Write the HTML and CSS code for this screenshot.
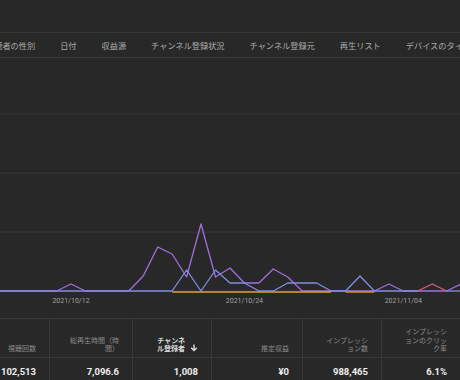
FILE: index.html
```html
<!DOCTYPE html>
<html lang="ja">
<head>
  <meta charset="UTF-8">
  <meta name="viewport" content="width=device-width, initial-scale=1.0">
  <title>アナリティクス</title>
  <link rel="stylesheet" href="styles.css">
</head>
<body>
  <div class="topbar"></div>
  <nav class="tabs">
    <span class="tab">視聴者の性別</span>
    <span class="tab">日付</span>
    <span class="tab">収益源</span>
    <span class="tab">チャンネル登録状況</span>
    <span class="tab">チャンネル登録元</span>
    <span class="tab">再生リスト</span>
    <span class="tab">デバイスのタイプ</span>
  </nav>
  <div class="chart">
    <svg width="460" height="260" viewBox="0 58 460 260">
      <g class="grid">
        <line x1="0" y1="114" x2="460" y2="114"/>
        <line x1="0" y1="173" x2="460" y2="173"/>
        <line x1="0" y1="232" x2="460" y2="232"/>
        <line x1="0" y1="291" x2="460" y2="291"/>
      </g>
      <polyline class="line purple" points="0,291 56.5,291 71,284 85.5,291 128.8,291 143.2,276 157.7,247 172.1,254 186.6,277 201,224 215.5,277 230,268 244.4,283 258.9,283 273.3,269 287.7,277 302.2,291 374.4,291 388.9,284 403.3,291 446.7,291 461,284"/>
      <polyline class="line orange" points="172.1,292 331.1,292"/>
      <polyline class="line orange" points="345.5,292 374.4,292"/>
      <polyline class="line blue" points="0,291 172.1,291 186.6,270 201,291 215.5,270 230,283 244.4,283 258.9,291 273.3,291 287.7,283 316.6,283 331.1,291 345.5,291 360,276 374.4,291 417.8,291"/>
      <polyline class="line red" points="417.8,291 432.2,284 446.7,291"/>
      <polyline class="line blue" points="446.7,291 461,291"/>
      <g class="dates">
        <text x="71" y="302.5">2021/10/12</text>
        <text x="244.4" y="302.5">2021/10/24</text>
        <text x="403.3" y="302.5">2021/11/04</text>
      </g>
    </svg>
  </div>
  <table class="metrics">
    <tr class="head">
      <th class="c1">視聴回数</th>
      <th class="c2">総再生時間（時<br>間）</th>
      <th class="c3 sorted">
        <div class="sortlabel">
          <span>チャンネ<br>ル登録者</span>
          <svg class="arrow" width="8" height="8" viewBox="0 0 8 8"><path d="M4 0.5v6M1.2 3.8L4 6.6l2.8-2.8"/></svg>
        </div>
      </th>
      <th class="c4">推定収益</th>
      <th class="c5">インプレッシ<br>ョン数</th>
      <th class="c6">インプレッシ<br>ョンのクリッ<br>ク率</th>
      <th class="c7"></th>
    </tr>
    <tr class="total">
      <td>102,513</td>
      <td>7,096.6</td>
      <td>1,008</td>
      <td>¥0</td>
      <td>988,465</td>
      <td>6.1%</td>
      <td></td>
    </tr>
  </table>
</body>
</html>
```

FILE: styles.css
```css
body {
  margin: 0;
  width: 460px;
  height: 380px;
  overflow: hidden;
  background: #282828;
  font-family: Roboto, "Noto Sans CJK JP", sans-serif;
}
.topbar {
  height: 32px;
  border-bottom: 1px solid #3a3a3a;
}
.tabs {
  display: flex;
  align-items: center;
  gap: 25px;
  height: 24px;
  margin-left: -14px;
  border-bottom: 1px solid #3a3a3a;
  font-family: "Noto Sans CJK JP", sans-serif;
  font-size: 8.2px;
  color: #acacac;
  white-space: nowrap;
}
.chart {
  height: 260px;
}
.chart svg {
  display: block;
}
.grid line {
  stroke: #363636;
  stroke-width: 1;
}
.line {
  fill: none;
  stroke-width: 1.3;
  stroke-linejoin: round;
}
.purple { stroke: #a06fdc; }
.blue { stroke: #7f8fe0; }
.orange { stroke: #e0a030; }
.red { stroke: #d8607a; }
.dates text {
  fill: #a0a0a0;
  font-family: Roboto, sans-serif;
  font-size: 7px;
  text-anchor: middle;
}
.metrics {
  border-collapse: collapse;
  table-layout: fixed;
  width: 460px;
}
.metrics th, .metrics td {
  border: 1px solid #383838;
  border-left: none;
  padding: 0 13px 0 0;
  text-align: right;
}
.metrics th:last-child, .metrics td:last-child {
  border-right: none;
}
.head th {
  height: 34px;
  vertical-align: bottom;
  padding-bottom: 4px;
  font-family: "Noto Sans CJK JP", sans-serif;
  font-size: 7px;
  line-height: 8.6px;
  font-weight: normal;
  color: #8c8c8c;
}
.head th.sorted {
  color: #dcdcdc;
  font-weight: bold;
}
.sortlabel {
  display: flex;
  justify-content: flex-end;
  align-items: flex-end;
  gap: 5px;
}
.arrow {
  margin-bottom: 1px;
}
.arrow path {
  fill: none;
  stroke: #dcdcdc;
  stroke-width: 1.4;
}
.c1 { width: 36px; }
.c2 { width: 69px; }
.c3 { width: 65px; }
.c4 { width: 77px; }
.c5 { width: 65px; }
.c6 { width: 65px; }
.c7 { width: 4px; }
.metrics th.c7 { padding: 0; }
.total td {
  height: 27px;
  font-size: 9.5px;
  font-weight: bold;
  color: #eeeeee;
}
.total td:last-child {
  padding: 0;
}
```
